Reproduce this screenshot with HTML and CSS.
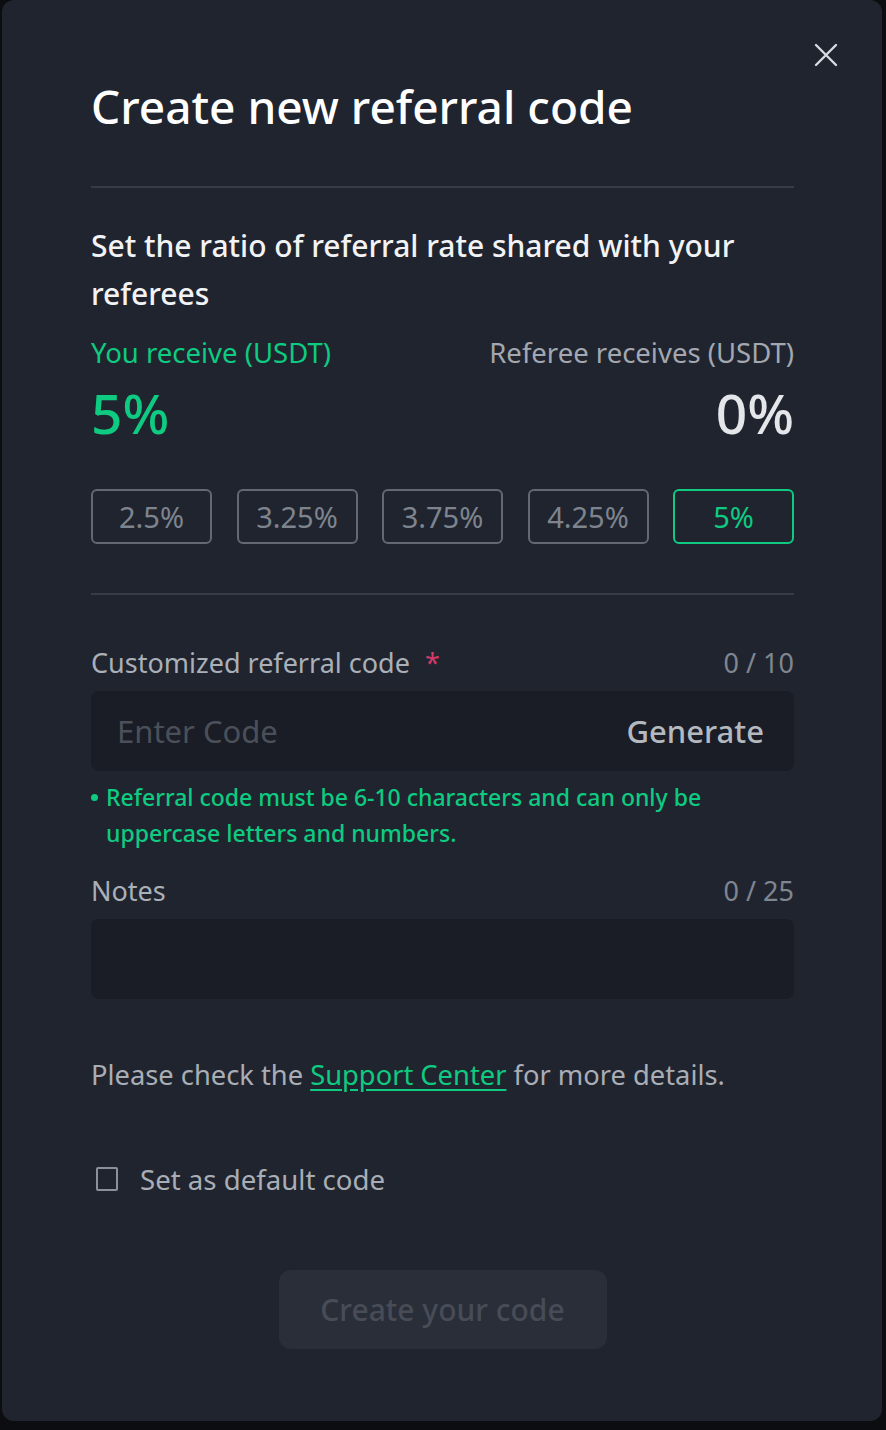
FILE: index.html
```html
<!DOCTYPE html>
<html lang="en">
<head>
<meta charset="utf-8">
<title>Create new referral code</title>
<link rel="stylesheet" href="styles.css">
</head>
<body>
<div class="modal">
  <button class="close" aria-label="Close">
    <svg width="24" height="24" viewBox="0 0 24 24"><path d="M2 2L22 22M22 2L2 22" stroke="#d8dbe0" stroke-width="2.4" stroke-linecap="round" fill="none"/></svg>
  </button>
  <h1 class="title">Create new referral code</h1>
  <div class="divider"></div>
  <p class="subtitle">Set the ratio of referral rate shared with your referees</p>
  <div class="ratio-head">
    <span class="you">You receive (USDT)</span>
    <span class="ref">Referee receives (USDT)</span>
  </div>
  <div class="ratio-val">
    <span class="you-val">5%</span>
    <span class="ref-val">0%</span>
  </div>
  <div class="options">
    <button class="opt">2.5%</button>
    <button class="opt">3.25%</button>
    <button class="opt">3.75%</button>
    <button class="opt">4.25%</button>
    <button class="opt active">5%</button>
  </div>
  <div class="divider second"></div>
  <div class="field-head">
    <span class="label">Customized referral code <span class="req">*</span></span>
    <span class="count">0 / 10</span>
  </div>
  <div class="input">
    <span class="placeholder">Enter Code</span>
    <span class="generate">Generate</span>
  </div>
  <div class="hint"><span class="dot"></span><span>Referral code must be 6-10 characters and can only be uppercase letters and numbers.</span></div>
  <div class="field-head notes-head">
    <span class="label">Notes</span>
    <span class="count">0 / 25</span>
  </div>
  <div class="input"></div>
  <p class="support">Please check the <a href="#">Support Center</a> for more details.</p>
  <label class="check"><span class="box"></span><span>Set as default code</span></label>
  <div class="submit-wrap"><button class="submit">Create your code</button></div>
</div>
</body>
</html>
```

FILE: styles.css
```css
* { box-sizing: border-box; }
html, body { margin: 0; padding: 0; }
body {
  background: #0b0d10;
  font-family: "Noto Sans", "Open Sans", sans-serif;
  width: 886px;
  height: 1430px;
  overflow: hidden;
}
.modal {
  position: relative;
  margin-left: 2px;
  width: 880px;
  height: 1421px;
  background: #20242f;
  border-radius: 12px;
  padding: 72px 88px 0 89px;
  color: #eaecef;
}
.close {
  position: absolute;
  top: 43px;
  right: 44px;
  width: 24px;
  height: 24px;
  padding: 0;
  border: 0;
  background: none;
  display: flex;
}
.title {
  margin: 0;
  font-size: 46px;
  line-height: 68px;
  font-weight: 500;
  color: #ffffff;
}
.divider {
  height: 2px;
  background: #363b46;
  margin-top: 46px;
}
.subtitle {
  margin: 34px 0 0;
  font-size: 30px;
  line-height: 48px;
  font-weight: 500;
  color: #f2f3f5;
  padding-right: 30px;
}
.ratio-head {
  display: flex;
  justify-content: space-between;
  font-size: 27.5px;
  line-height: 40px;
  margin-top: 15px;
}
.you { color: #0ecb81; }
.ref { color: #a3a8b0; }
.ratio-val {
  display: flex;
  justify-content: space-between;
  font-size: 55px;
  line-height: 68px;
  font-weight: 500;
  margin-top: 6px;
}
.you-val { color: #0ecb81; }
.ref-val { color: #e4e6ea; }
.options {
  display: grid;
  grid-template-columns: repeat(5, 121px);
  justify-content: space-between;
  margin-top: 42px;
}
.opt {
  height: 55px;
  background: transparent;
  border: 2px solid #636873;
  border-radius: 6px;
  color: #7e848e;
  font-family: inherit;
  font-size: 29px;
  padding: 0;
}
.opt.active {
  border-color: #0ecb81;
  color: #0ecb81;
}
.divider.second { margin-top: 49px; }
.field-head {
  display: flex;
  justify-content: space-between;
  font-size: 27px;
  line-height: 40px;
  margin-top: 48px;
}
.label { color: #aab0b8; }
.req { color: #d33a69; margin-left: 8px; }
.count { color: #80868f; }
.input {
  margin-top: 8px;
  height: 80px;
  background: #1a1d25;
  border-radius: 8px;
  display: flex;
  align-items: center;
  justify-content: space-between;
  padding: 0 30px 0 26px;
  font-size: 31px;
}
.placeholder { color: #4a505a; }
.generate { color: #b4b9c0; font-weight: 500; }
.hint {
  display: flex;
  gap: 8px;
  margin-top: 8px;
  font-size: 23px;
  line-height: 36px;
  font-weight: 500;
  color: #0ecb81;
  padding-right: 70px;
}
.dot {
  flex: none;
  width: 7px;
  height: 7px;
  border-radius: 50%;
  background: #0ecb81;
  margin-top: 15px;
}
.notes-head { margin-top: 20px; }
.support {
  margin: 56px 0 0;
  font-size: 27.3px;
  line-height: 40px;
  color: #a9aeb6;
}
.support a { color: #0ecb81; text-decoration: underline; text-underline-offset: 4px; }
.check {
  display: flex;
  align-items: center;
  gap: 22px;
  margin-top: 64px;
  font-size: 27.6px;
  line-height: 40px;
  color: #a9aeb6;
  padding-left: 5px;
}
.box {
  width: 22px;
  height: 24px;
  border: 2px solid #8b9099;
  border-radius: 2px;
}
.submit-wrap {
  display: flex;
  justify-content: center;
  margin-top: 71px;
}
.submit {
  width: 328px;
  height: 79px;
  border: 0;
  border-radius: 12px;
  background: #2a2e39;
  color: #474c57;
  font-family: inherit;
  font-size: 30px;
  font-weight: 500;
}
```
